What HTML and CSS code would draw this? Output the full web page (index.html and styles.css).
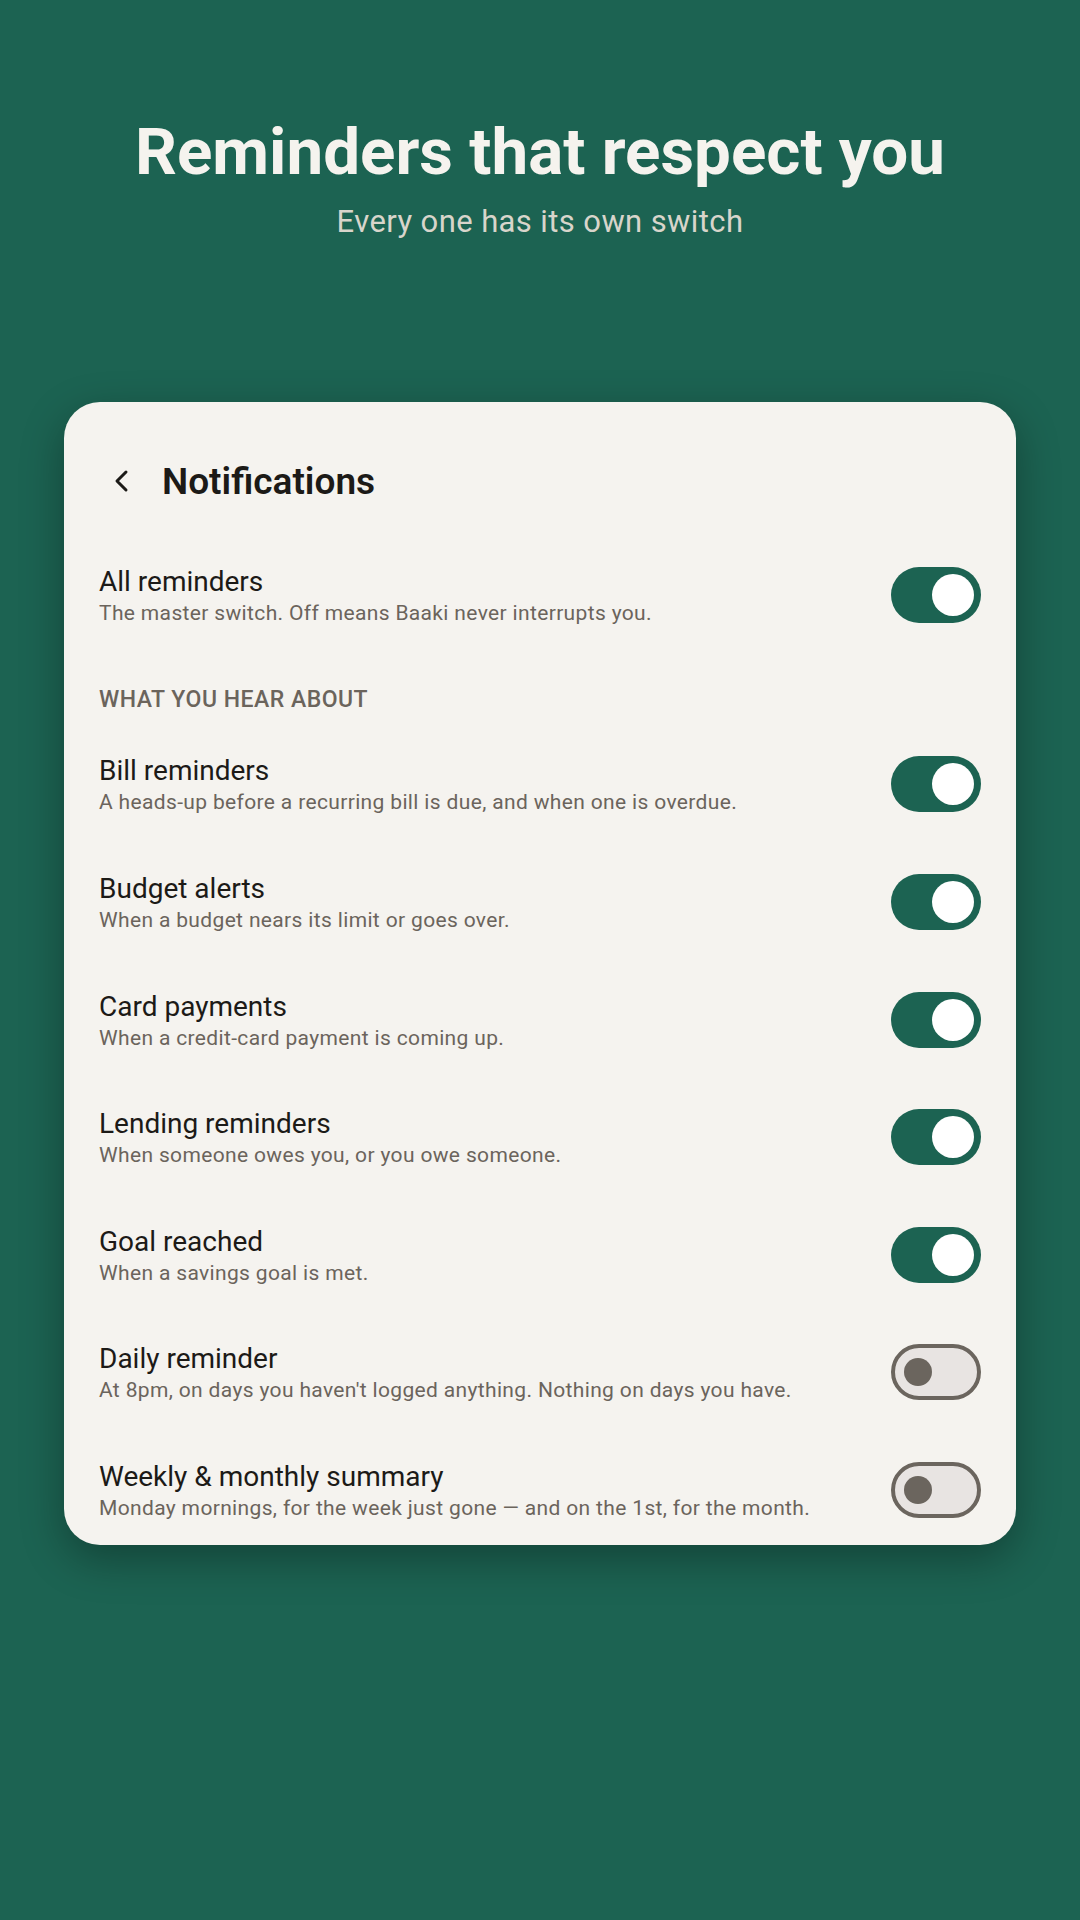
FILE: index.html
```html
<!DOCTYPE html>
<html lang="en">
<head>
<meta charset="utf-8">
<title>Notifications</title>
<link rel="stylesheet" href="styles.css">
</head>
<body>
<div class="screen">
  <header class="hero">
    <h1 class="hero-title">Reminders that respect you</h1>
    <p class="hero-sub">Every one has its own switch</p>
  </header>

  <section class="card">
    <div class="card-head">
      <svg class="back" viewBox="0 0 16 24" width="16" height="24" aria-hidden="true">
        <path d="M13 3 L4 12 L13 21" fill="none" stroke="#1c1a17" stroke-width="3" stroke-linecap="round" stroke-linejoin="round"/>
      </svg>
      <h2 class="card-title">Notifications</h2>
    </div>

    <div class="row">
      <div class="row-text">
        <div class="row-title">All reminders</div>
        <div class="row-sub">The master switch. Off means Baaki never interrupts you.</div>
      </div>
      <span class="switch on"><span class="thumb"></span></span>
    </div>

    <div class="section-label">WHAT YOU HEAR ABOUT</div>

    <div class="row">
      <div class="row-text">
        <div class="row-title">Bill reminders</div>
        <div class="row-sub">A heads-up before a recurring bill is due, and when one is overdue.</div>
      </div>
      <span class="switch on"><span class="thumb"></span></span>
    </div>

    <div class="row">
      <div class="row-text">
        <div class="row-title">Budget alerts</div>
        <div class="row-sub">When a budget nears its limit or goes over.</div>
      </div>
      <span class="switch on"><span class="thumb"></span></span>
    </div>

    <div class="row">
      <div class="row-text">
        <div class="row-title">Card payments</div>
        <div class="row-sub">When a credit-card payment is coming up.</div>
      </div>
      <span class="switch on"><span class="thumb"></span></span>
    </div>

    <div class="row">
      <div class="row-text">
        <div class="row-title">Lending reminders</div>
        <div class="row-sub">When someone owes you, or you owe someone.</div>
      </div>
      <span class="switch on"><span class="thumb"></span></span>
    </div>

    <div class="row">
      <div class="row-text">
        <div class="row-title">Goal reached</div>
        <div class="row-sub">When a savings goal is met.</div>
      </div>
      <span class="switch on"><span class="thumb"></span></span>
    </div>

    <div class="row">
      <div class="row-text">
        <div class="row-title">Daily reminder</div>
        <div class="row-sub">At 8pm, on days you haven't logged anything. Nothing on days you have.</div>
      </div>
      <span class="switch off"><span class="thumb"></span></span>
    </div>

    <div class="row">
      <div class="row-text">
        <div class="row-title">Weekly &amp; monthly summary</div>
        <div class="row-sub">Monday mornings, for the week just gone — and on the 1st, for the month.</div>
      </div>
      <span class="switch off"><span class="thumb"></span></span>
    </div>
  </section>
</div>
</body>
</html>
```

FILE: styles.css
```css
* { box-sizing: border-box; }
html, body { margin: 0; padding: 0; }
body {
  width: 1080px;
  height: 1920px;
  background: #1c6352;
  font-family: Roboto, "Liberation Sans", sans-serif;
  overflow: hidden;
}
.screen {
  display: flex;
  flex-direction: column;
  align-items: center;
}
.hero {
  display: flex;
  flex-direction: column;
  align-items: center;
  padding-top: 112px;
}
.hero-title {
  margin: 0;
  font-size: 65.5px;
  line-height: 80px;
  font-weight: 700;
  color: #f5f3ee;
}
.hero-sub {
  margin: 0;
  margin-top: 10px;
  font-size: 31px;
  line-height: 40px;
  font-weight: 400;
  letter-spacing: 0.4px;
  color: #d8d5cb;
}
.card {
  margin-top: 160px;
  width: 952px;
  height: 1143px;
  background: #f5f3ef;
  border-radius: 36px;
  overflow: hidden;
  box-shadow: 0 14px 44px rgba(0, 0, 0, 0.32);
  padding: 0 35px;
}
.card-head {
  height: 134px;
  padding-top: 24px;
  display: flex;
  align-items: center;
  gap: 33px;
}
.back { margin-left: 14px; }
.card-title {
  margin: 0;
  font-size: 37px;
  font-weight: 600;
  color: #1c1a17;
}
.row {
  height: 117.6px;
  display: flex;
  align-items: center;
  justify-content: space-between;
}
.row-text { display: flex; flex-direction: column; margin-top: 2px; }
.row-title {
  font-size: 28px;
  line-height: 34px;
  color: #1c1a17;
}
.row-sub {
  font-size: 21px;
  line-height: 28px;
  color: #6b645c;
  letter-spacing: 0.35px;
}
.section-label {
  padding-top: 32px;
  padding-bottom: 12px;
  font-size: 23px;
  line-height: 28px;
  font-weight: 500;
  letter-spacing: 0.5px;
  color: #6b645c;
}
.switch {
  flex: none;
  width: 90px;
  height: 56px;
  border-radius: 28px;
  display: flex;
  align-items: center;
}
.switch.on {
  background: #1c6352;
  justify-content: flex-end;
  padding-right: 7px;
}
.switch.on .thumb {
  width: 42px;
  height: 42px;
  border-radius: 50%;
  background: #ffffff;
}
.switch.off {
  background: #e8e4e2;
  border: 4px solid #6b655e;
  padding-left: 9px;
}
.switch.off .thumb {
  width: 28px;
  height: 28px;
  border-radius: 50%;
  background: #6b655e;
}
```
